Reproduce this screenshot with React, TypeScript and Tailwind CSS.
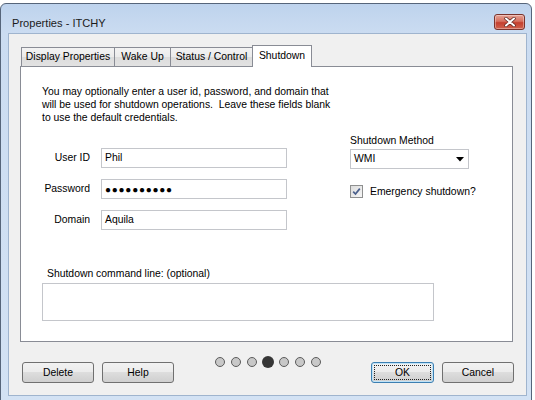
import React from "react";

const FONT = { fontFamily: '"Liberation Sans", Arial, sans-serif' };

const TABS = [
  { label: "Display Properties", w: "w-[94px]" },
  { label: "Wake Up", w: "w-[57px]" },
  { label: "Status / Control", w: "w-[83px]" },
];

const btn =
  "h-[21px] rounded-[3px] border border-[#707070] bg-[linear-gradient(#f2f2f2,#ebebeb_50%,#dddddd_50%,#cfcfcf)] text-[10.4px] leading-[19px] text-center text-black";

function Dot({ active }: { active?: boolean }) {
  return (
    <div className="flex h-[14px] w-[16px] items-center justify-center">
      {active ? (
        <div className="h-[12px] w-[12px] rounded-full bg-[#363636]" />
      ) : (
        <div className="h-[10px] w-[10px] rounded-full border border-[#5c5c5c] bg-[#c8c8c8]" />
      )}
    </div>
  );
}

function Field({ children }: { children?: React.ReactNode }) {
  return (
    <div className="flex h-[20px] w-[186px] items-center border border-[#c4c6cb] bg-white pl-[3px] text-[10.4px]">
      {children}
    </div>
  );
}

export default function App() {
  return (
    <div className="h-[400px] w-[535px] overflow-hidden bg-white" style={FONT}>
      <div className="mt-[3px] h-[400px] w-[532px] rounded-t-[6px] border border-[#56657a] bg-[linear-gradient(#bed3ed,#cbdcf1_30px,#d3e2f4)] pl-[7px]">
        {/* title bar */}
        <div className="flex h-[29px] items-start justify-between pr-[6px]">
          <div className="mt-[12px] pl-[4px] text-[11.1px] leading-[14px] text-[#1b1b1b]">
            Properties - ITCHY
          </div>
          <div className="mt-[10px] flex h-[16px] w-[31px] items-center justify-center rounded-[3px] border border-[#7a332c] bg-[linear-gradient(#e6a396,#d6705f_45%,#c4402f_55%,#d0624e)] shadow-[inset_0_0_0_1px_rgba(255,255,255,0.35)]">
            <svg width="12" height="10" viewBox="0 0 12 10">
              <path d="M2 1.5 L10 8.5 M10 1.5 L2 8.5" stroke="#5a2620" strokeWidth="3.4" strokeLinecap="round" />
              <path d="M2 1.5 L10 8.5 M10 1.5 L2 8.5" stroke="#ffffff" strokeWidth="2" strokeLinecap="round" />
            </svg>
          </div>
        </div>

        {/* client area */}
        <div className="h-[363px] w-[519px] border border-[#9fb4ce] bg-[#f0f0f0]">
          {/* tabs */}
          <div className="relative z-10 -mb-px ml-[12px] mt-[11px] flex h-[22px] items-end">
            {TABS.map((t, i) => (
              <div
                key={t.label}
                className={`mb-px flex h-[19px] items-center justify-center border border-b-0 border-[#898c95] bg-[linear-gradient(#f3f3f3,#ebebeb_50%,#dcdcdc_50%,#e2e2e2)] text-[10.4px] text-black ${t.w} ${i > 0 ? "-ml-px" : ""}`}
              >
                {t.label}
              </div>
            ))}
            <div className="-ml-px flex h-[22px] w-[60px] items-start justify-center border border-b-0 border-[#898c95] bg-white pt-[3px] text-[10.4px] leading-[13px] text-black">
              Shutdown
            </div>
          </div>

          {/* panel */}
          <div className="ml-[11px] h-[276px] w-[493px] border border-[#898c95] bg-white pl-[21px] pt-[18px] text-[10.4px] text-black">
            <p className="leading-[13px]">
              You may optionally enter a user id, password, and domain that
              <br />
              will be used for shutdown operations.{"\u00a0 "}Leave these fields blank
              <br />
              to use the default credentials.
            </p>

            <div className="mt-[10px] flex items-start">
              <div className="grid grid-cols-[48px_186px] gap-x-[11px] gap-y-[11px] pt-[14px]">
                <div className="flex h-[20px] items-center justify-end">User ID</div>
                <Field>Phil</Field>
                <div className="flex h-[20px] items-center justify-end">Password</div>
                <Field>
                  <span className="text-[10px] tracking-[0.75px]">●●●●●●●●●●</span>
                </Field>
                <div className="flex h-[20px] items-center justify-end">Domain</div>
                <Field>Aquila</Field>
              </div>

              <div className="ml-[63px]">
                <div className="leading-[13px]">Shutdown Method</div>
                <div className="mt-[2px] flex h-[20px] w-[119px] items-center justify-between border border-[#c4c6cb] bg-white pl-[3px] pr-[4px]">
                  <span>WMI</span>
                  <svg width="8" height="5" viewBox="0 0 8 5">
                    <path d="M0 0 H8 L4 4.5 Z" fill="#000" />
                  </svg>
                </div>
                <div className="mt-[16px] flex items-center">
                  <div className="flex h-[13px] w-[13px] items-center justify-center border border-[#8e8f8f] bg-[linear-gradient(135deg,#dcdcdc,#f6f6f6)]">
                    <svg width="9" height="9" viewBox="0 0 9 9">
                      <path d="M1.2 4.6 L3.5 7 L7.8 1.6" fill="none" stroke="#4a5f8c" strokeWidth="1.7" />
                    </svg>
                  </div>
                  <span className="ml-[7px] leading-[13px]">Emergency shutdown?</span>
                </div>
              </div>
            </div>

            <div className="ml-[5px] mt-[37px] leading-[13px]">Shutdown command line: (optional)</div>
            <div className="mt-[3px] h-[38px] w-[392px] border border-[#c4c6cb] bg-white" />
          </div>

          {/* bottom row */}
          <div className="ml-[13px] mt-[13px] flex items-start">
            <div className={`${btn} mt-[7px] w-[72px]`}>Delete</div>
            <div className={`${btn} ml-[8px] mt-[7px] w-[72px]`}>Help</div>
            <div className="ml-[38px] flex">
              <Dot />
              <Dot />
              <Dot />
              <Dot active />
              <Dot />
              <Dot />
              <Dot />
            </div>
            <div className="ml-[47px] mt-[7px] h-[21px] w-[63px] rounded-[3px] border border-[#3c7fb1] bg-[linear-gradient(#f2f2f2,#ebebeb_50%,#dddddd_50%,#cfcfcf)] p-[2px] shadow-[inset_0_0_0_1px_#bfe3f8]">
              <div className="flex h-full w-full items-center justify-center border border-dotted border-[#222] text-[10.4px] text-black">
                OK
              </div>
            </div>
            <div className={`${btn} ml-[8px] mt-[7px] w-[72px]`}>Cancel</div>
          </div>
        </div>
      </div>
    </div>
  );
}
